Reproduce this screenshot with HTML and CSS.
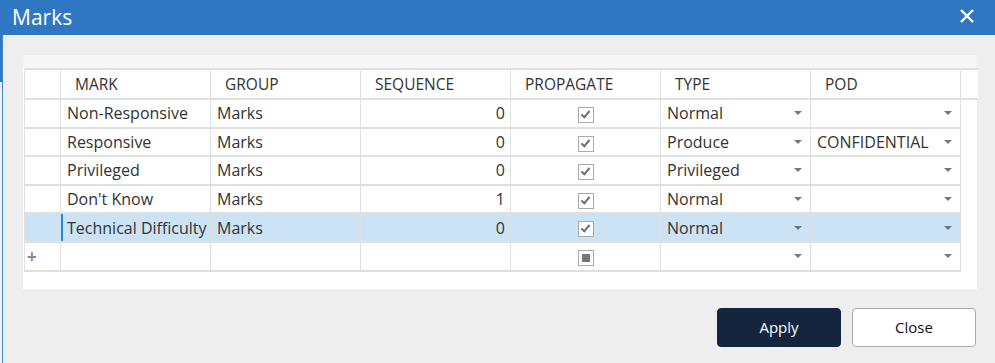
FILE: index.html
```html
<!DOCTYPE html>
<html>

<head>
    <title>Marks</title>
    <meta charset="UTF-8">
    <link rel="stylesheet" href="styles.css">
</head>

<body>
<div class="dialog">
    <div class="titlebar">
        <span class="title">Marks</span>
        <svg class="close-x" width="16" height="16" viewBox="0 0 16 16">
            <path d="M2 2 L14 14 M14 2 L2 14" stroke="#fff" stroke-width="2.4" fill="none" />
        </svg>
    </div>

    <div class="content">
        <div class="panel">
            <table class="grid">
                <colgroup>
                    <col class="c-rowhead">
                    <col class="c-data">
                    <col class="c-data">
                    <col class="c-data">
                    <col class="c-data">
                    <col class="c-data">
                    <col class="c-data">
                    <col class="c-filler">
                </colgroup>
                <thead>
                    <tr>
                        <th class="rowhead"></th>
                        <th>MARK</th>
                        <th>GROUP</th>
                        <th>SEQUENCE</th>
                        <th>PROPAGATE</th>
                        <th>TYPE</th>
                        <th>POD</th>
                        <th class="filler"></th>
                    </tr>
                </thead>
                <tbody>
                    <tr>
                        <td class="rowhead"></td>
                        <td>Non-Responsive</td>
                        <td>Marks</td>
                        <td class="num">0</td>
                        <td class="check"><span class="box checked"></span></td>
                        <td class="drop">Normal<i class="arrow"></i></td>
                        <td class="drop"><i class="arrow"></i></td>
                        <td class="blank"></td>
                    </tr>
                    <tr>
                        <td class="rowhead"></td>
                        <td>Responsive</td>
                        <td>Marks</td>
                        <td class="num">0</td>
                        <td class="check"><span class="box checked"></span></td>
                        <td class="drop">Produce<i class="arrow"></i></td>
                        <td class="drop">CONFIDENTIAL<i class="arrow"></i></td>
                        <td class="blank"></td>
                    </tr>
                    <tr>
                        <td class="rowhead"></td>
                        <td>Privileged</td>
                        <td>Marks</td>
                        <td class="num">0</td>
                        <td class="check"><span class="box checked"></span></td>
                        <td class="drop">Privileged<i class="arrow"></i></td>
                        <td class="drop"><i class="arrow"></i></td>
                        <td class="blank"></td>
                    </tr>
                    <tr>
                        <td class="rowhead"></td>
                        <td>Don't Know</td>
                        <td>Marks</td>
                        <td class="num">1</td>
                        <td class="check"><span class="box checked"></span></td>
                        <td class="drop">Normal<i class="arrow"></i></td>
                        <td class="drop"><i class="arrow"></i></td>
                        <td class="blank"></td>
                    </tr>
                    <tr class="selected">
                        <td class="rowhead"></td>
                        <td class="current">Technical Difficulty</td>
                        <td>Marks</td>
                        <td class="num">0</td>
                        <td class="check"><span class="box checked"></span></td>
                        <td class="drop">Normal<i class="arrow"></i></td>
                        <td class="drop"><i class="arrow"></i></td>
                        <td class="blank"></td>
                    </tr>
                    <tr class="new-row">
                        <td class="rowhead"><span class="plus">+</span></td>
                        <td></td>
                        <td></td>
                        <td class="num"></td>
                        <td class="check"><span class="box partial"></span></td>
                        <td class="drop"><i class="arrow"></i></td>
                        <td class="drop"><i class="arrow"></i></td>
                        <td class="blank"></td>
                    </tr>
                </tbody>
            </table>
        </div>

        <div class="actions">
            <button class="btn primary">Apply</button>
            <button class="btn">Close</button>
        </div>
    </div>
</div>
</body>

</html>
```

FILE: styles.css
```css
:root {
    --title-blue: #3077c3;
    --grid-line: #e0e0e0;
    --text: #333333;
    --selected: #cce3f5;
}

html,
body {
    height: 100%;
}

body {
    margin: 0;
    padding-left: 2px;
    font-family: "Open Sans", "DejaVu Sans", sans-serif;
    color: var(--text);
    background: linear-gradient(to bottom, var(--title-blue) 82px, #f4f4f4 82px);
    overflow: hidden;
}

.dialog {
    height: 100%;
    border-left: 1px solid #3a86d6;
    background: #eeeeee;
    display: flex;
    flex-direction: column;
}

.titlebar {
    height: 35px;
    background: var(--title-blue);
    display: flex;
    align-items: center;
    justify-content: space-between;
    padding: 0 20px 0 10px;
    margin-left: -1px;
}

.title {
    color: #ffffff;
    font-size: 21px;
    margin-top: -2px;
}

.close-x {
    margin-top: -3px;
}

.content {
    padding: 20px 18px 0 20px;
}

.panel {
    padding: 13px 0 17px 1px;
    background: linear-gradient(to bottom, #f7f7f7 13px, #ffffff 13px);
}

.grid {
    border-collapse: collapse;
    table-layout: fixed;
    width: 953px;
    font-size: 16px;
}

.c-rowhead {
    width: 36px;
}

.c-data {
    width: 150px;
}

.c-filler {
    width: 17px;
}

.grid th,
.grid td {
    box-sizing: border-box;
    border: 1px solid var(--grid-line);
    border-width: 2px 1px;
    padding: 0 6px;
    height: 28.6px;
    white-space: nowrap;
    overflow: hidden;
}

.grid th {
    height: 30px;
    font-weight: normal;
    text-align: left;
    padding-left: 14px;
    font-size: 15.5px;
    background: #ffffff;
}

.grid th.filler {
    padding: 0;
    border-right: none;
}

.grid td.blank {
    border: none;
    background: transparent;
}

.grid .rowhead {
    padding: 0 0 0 2px;
}

.grid td {
    background: #ffffff;
}

.grid tr.selected td:not(.blank) {
    background: var(--selected);
}

.grid td.current {
    box-shadow: inset 2px 0 0 #1e88e5;
}

.num {
    text-align: right;
    padding-right: 5px !important;
}

.check {
    text-align: center;
}

.box {
    display: inline-block;
    width: 14px;
    height: 14px;
    border: 1px solid #aaaaaa;
    background: #ffffff;
    vertical-align: middle;
    position: relative;
}

.box.checked::after {
    content: "";
    position: absolute;
    left: 4px;
    top: 1px;
    width: 3px;
    height: 7px;
    border: solid #6f6f6f;
    border-width: 0 2.5px 2.5px 0;
    transform: rotate(40deg);
}

.box.partial::after {
    content: "";
    position: absolute;
    left: 3px;
    top: 3px;
    width: 8px;
    height: 8px;
    background: #777777;
}

.drop {
    position: relative;
}

.arrow {
    position: absolute;
    right: 8px;
    top: 50%;
    margin-top: -2px;
    width: 0;
    height: 0;
    border-left: 4px solid transparent;
    border-right: 4px solid transparent;
    border-top: 4px solid #777777;
}

.plus {
    color: #888888;
    font-size: 17px;
    font-weight: bold;
}

.actions {
    display: flex;
    justify-content: flex-end;
    gap: 11px;
    padding: 19px 1px 0 0;
}

.btn {
    width: 124px;
    height: 39px;
    font-family: "Open Sans", "DejaVu Sans", sans-serif;
    font-size: 15px;
    color: #111111;
    background: #ffffff;
    border: 1px solid #aaaaaa;
    border-radius: 4px;
}

.btn.primary {
    background: #13263d;
    border-color: #13263d;
    color: #ffffff;
}
```
